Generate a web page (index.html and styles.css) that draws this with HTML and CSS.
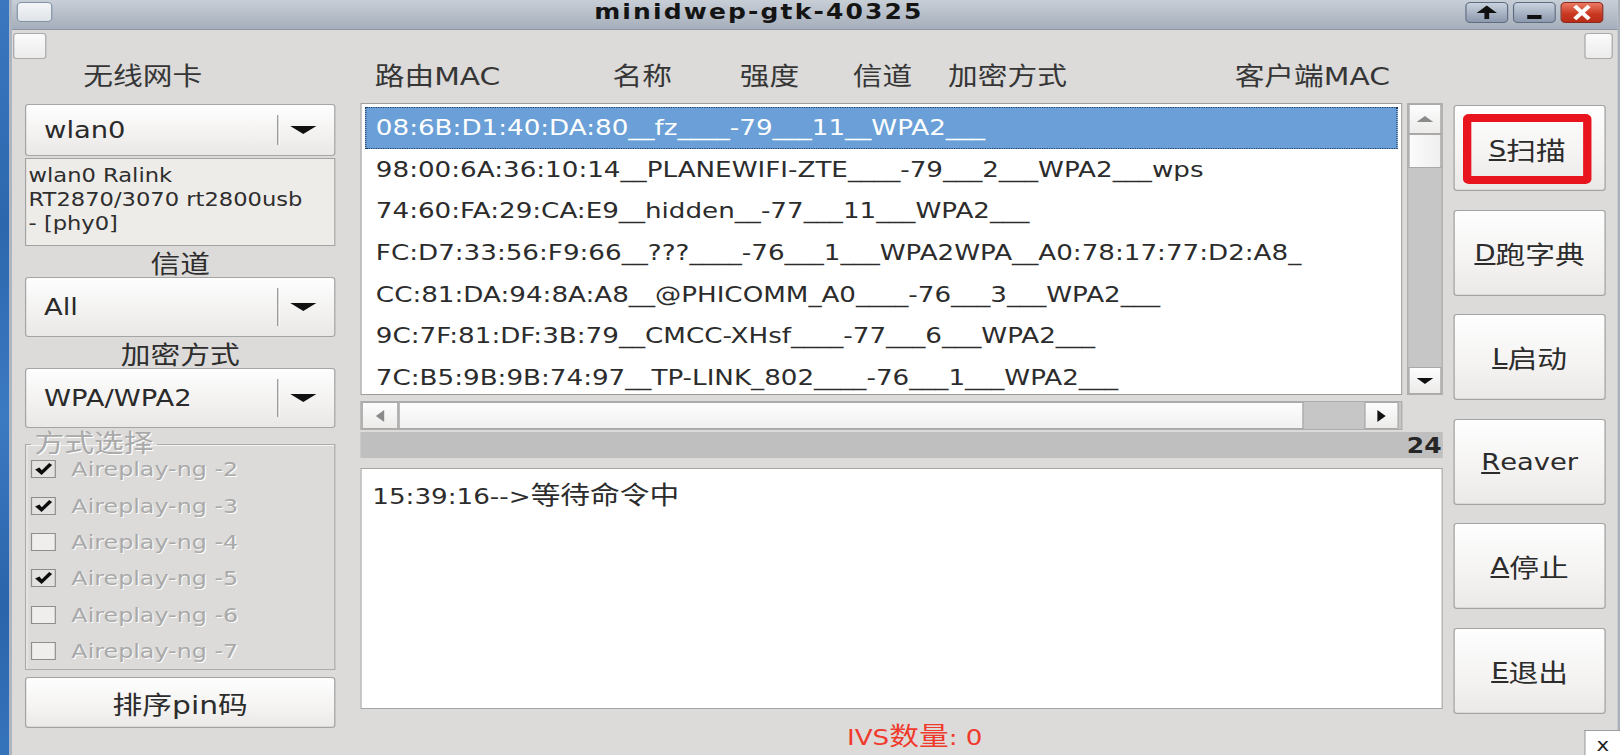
FILE: index.html
```html
<!DOCTYPE html>
<html lang="zh">
<head>
<meta charset="utf-8">
<title>minidwep-gtk-40325</title>
<link rel="stylesheet" href="styles.css">
</head>
<body>
<div class="screen">
  <div class="desktop"></div>
  <div class="window">
    <div class="titlebar">
      <div class="tb-menu"></div>
      <div class="tb-title">minidwep-gtk-40325</div>
      <div class="tb-btn">
        <svg width="36" height="21" viewBox="0 0 36 21"><polygon points="9.5,11 18,3.5 26.5,11" fill="#111"/><rect x="16" y="10" width="4" height="7" fill="#111"/></svg>
      </div>
      <div class="tb-btn">
        <svg width="36" height="21" viewBox="0 0 36 21"><rect x="12" y="13" width="12" height="4" fill="#111"/></svg>
      </div>
      <div class="tb-btn tb-close">
        <svg width="36" height="21" viewBox="0 0 36 21"><path d="M12 4 L24 17 M24 4 L12 17" stroke="#fff" stroke-width="3.6" fill="none"/></svg>
      </div>
    </div>
    <div class="client">
      <div class="topstrip">
        <div class="handle"></div>
        <div class="handle handle-r"></div>
      </div>
      <div class="headers">
        <span class="hd hd1">无线网卡</span>
        <span class="hd hd2">路由MAC</span>
        <span class="hd hd3">名称</span>
        <span class="hd hd4">强度</span>
        <span class="hd hd5">信道</span>
        <span class="hd hd6">加密方式</span>
        <span class="hd">客户端MAC</span>
      </div>
      <div class="body">
        <div class="leftcol">
          <div class="combo combo-short"><span class="combo-text">wlan0</span><span class="sep"></span><span class="arrow"></span></div>
          <div class="info">wlan0 Ralink<br>RT2870/3070 rt2800usb<br>- [phy0]</div>
          <div class="label">信道</div>
          <div class="combo"><span class="combo-text">All</span><span class="sep"></span><span class="arrow"></span></div>
          <div class="label">加密方式</div>
          <div class="combo"><span class="combo-text">WPA/WPA2</span><span class="sep"></span><span class="arrow"></span></div>
          <fieldset class="modes">
            <legend>方式选择</legend>
            <div class="chk-row"><span class="chk on"><svg width="21" height="18" viewBox="0 0 21 18"><path d="M2.8 9.6 L6.8 7.4 L9 10.4 L15.8 2.4 L18.6 4.6 L8.8 15.6 Z" fill="#0d0d0d"/></svg></span><span class="chk-label">Aireplay-ng -2</span></div>
            <div class="chk-row"><span class="chk on"><svg width="21" height="18" viewBox="0 0 21 18"><path d="M2.8 9.6 L6.8 7.4 L9 10.4 L15.8 2.4 L18.6 4.6 L8.8 15.6 Z" fill="#0d0d0d"/></svg></span><span class="chk-label">Aireplay-ng -3</span></div>
            <div class="chk-row"><span class="chk"></span><span class="chk-label">Aireplay-ng -4</span></div>
            <div class="chk-row"><span class="chk on"><svg width="21" height="18" viewBox="0 0 21 18"><path d="M2.8 9.6 L6.8 7.4 L9 10.4 L15.8 2.4 L18.6 4.6 L8.8 15.6 Z" fill="#0d0d0d"/></svg></span><span class="chk-label">Aireplay-ng -5</span></div>
            <div class="chk-row"><span class="chk"></span><span class="chk-label">Aireplay-ng -6</span></div>
            <div class="chk-row"><span class="chk"></span><span class="chk-label">Aireplay-ng -7</span></div>
          </fieldset>
          <div class="gbtn pin-btn">排序pin码</div>
        </div>
        <div class="midcol">
          <div class="listwrap">
            <div class="list">
              <div class="row sel">08:6B:D1:40:DA:80__fz____-79___11__WPA2___</div>
              <div class="row">98:00:6A:36:10:14__PLANEWIFI-ZTE____-79___2___WPA2___wps</div>
              <div class="row">74:60:FA:29:CA:E9__hidden__-77___11___WPA2___</div>
              <div class="row">FC:D7:33:56:F9:66__???____-76___1___WPA2WPA__A0:78:17:77:D2:A8_</div>
              <div class="row">CC:81:DA:94:8A:A8__@PHICOMM_A0____-76___3___WPA2___</div>
              <div class="row">9C:7F:81:DF:3B:79__CMCC-XHsf____-77___6___WPA2___</div>
              <div class="row">7C:B5:9B:9B:74:97__TP-LINK_802____-76___1___WPA2___</div>
            </div>
            <div class="vscroll">
              <div class="sb-btn sb-up"><span class="tri-up dim"></span></div>
              <div class="sb-thumb-v"></div>
              <div class="sb-trough"></div>
              <div class="sb-btn sb-down"><span class="tri-down"></span></div>
            </div>
          </div>
          <div class="hscroll">
            <div class="sb-btn sb-left"><span class="tri-left dim"></span></div>
            <div class="sb-thumb-h"></div>
            <div class="sb-trough"></div>
            <div class="sb-btn sb-right"><span class="tri-right"></span></div>
          </div>
          <div class="countbar">24</div>
          <div class="log">15:39:16--&gt;<span class="cjk">等待命令中</span></div>
          <div class="ivs">IVS<span class="cjk">数量</span>: 0</div>
        </div>
        <div class="rightcol">
          <div class="gbtn act scan"><div class="mark"><u>S</u><span class="cjk">扫描</span></div></div>
          <div class="gbtn act"><u>D</u><span class="cjk">跑字典</span></div>
          <div class="gbtn act"><u>L</u><span class="cjk">启动</span></div>
          <div class="gbtn act"><u>R</u>eaver</div>
          <div class="gbtn act"><u>A</u><span class="cjk">停止</span></div>
          <div class="gbtn act"><u>E</u><span class="cjk">退出</span></div>
        </div>
      </div>
    </div>
  </div>
  <div class="corner-x">x</div>
</div>
</body>
</html>
```

FILE: styles.css
```css
* { box-sizing: border-box; }
html, body { margin: 0; padding: 0; }
body {
  width: 1620px;
  height: 755px;
  overflow: hidden;
  background: #dcdbda;
  font-family: "DejaVu Sans", "Noto Sans CJK SC", sans-serif;
  color: #2e2e2e;
}
.screen {
  width: 1362px;
  height: 755px;
  display: flex;
  position: relative;
  transform: scaleX(1.18943);
  transform-origin: 0 0;
}
.desktop {
  width: 8px;
  flex: none;
  background: linear-gradient(#3a77bf, #2c67ad 30%, #3b79c1 55%, #2a64aa 80%, #3573ba);
}
.window {
  flex: 1;
  min-width: 0;
  display: flex;
  flex-direction: column;
  border-left: 2px solid #aab3bf;
  border-right: 2px solid #a9b0ba;
  background: #dcdbda;
}

/* title bar */
.titlebar {
  height: 30px;
  flex: none;
  display: flex;
  align-items: flex-start;
  padding: 2px 12px 0 4px;
  background: linear-gradient(#c8ced6, #a5aebb);
  border-bottom: 1px solid #8d98a7;
}
.tb-menu {
  width: 30px;
  height: 20px;
  border: 1px solid #8494a8;
  border-radius: 4px;
  background: linear-gradient(#f4f5f7, #dfe3e8);
}
.tb-title {
  flex: 1;
  text-align: center;
  font-weight: bold;
  font-size: 21px;
  line-height: 20px;
  letter-spacing: 1.8px;
  color: #141414;
}
.tb-btn {
  width: 36px;
  height: 21px;
  border: 1px solid #5f6d82;
  border-radius: 4px;
  background: linear-gradient(#c9d2de, #8c99ad);
  display: flex;
  align-items: center;
  justify-content: center;
  overflow: hidden;
}
.tb-btn + .tb-btn { margin-left: 4px; }
.tb-btn svg { display: block; flex: none; }
.tb-close {
  border-color: #8a2a1e;
  background: linear-gradient(#ec7a63, #c8361f 60%, #b82d19);
}

/* client area */
.client {
  flex: 1;
  display: flex;
  flex-direction: column;
  padding-left: 1px;
}
.topstrip {
  height: 32px;
  flex: none;
  display: flex;
  justify-content: space-between;
  align-items: flex-start;
  padding-top: 3px;
}
.handle {
  width: 28px;
  height: 26px;
  border: 1px solid #aaaaaa;
  border-radius: 3px;
  background: linear-gradient(#fbfbfb, #ebebeb);
}
.handle-r { width: 24px; margin-right: 4px; }

.headers {
  height: 30px;
  flex: none;
  display: flex;
  white-space: nowrap;
  line-height: 30px;
  font-size: 25px;
  color: #363636;
  padding-left: 59px;
}
.hd { flex: none; }
.hd1 { width: 245px; }
.hd2 { width: 200px; }
.hd3 { width: 107px; }
.hd4 { width: 95px; }
.hd5 { width: 80px; }
.hd6 { width: 241px; }

.body {
  flex: 1;
  display: flex;
  margin-top: 11px;
}

/* left column */
.leftcol {
  width: 261px;
  margin-left: 10px;
  display: flex;
  flex-direction: column;
}
.combo {
  height: 60px;
  flex: none;
  display: flex;
  align-items: center;
  padding: 0 15px 0 15px;
  border: 1px solid #a5a5a5;
  border-radius: 3px;
  background: linear-gradient(#fefefe, #f3f2f1 55%, #e9e8e7);
  font-size: 23px;
  color: #2a2a2a;
}
.combo-short { height: 52px; margin-top: 1px; }
.combo-text { flex: 1; }
.sep {
  width: 1px;
  align-self: stretch;
  margin: 10px 0;
  background: #8f8f8f;
  box-shadow: 1px 0 0 #ffffff;
}
.arrow {
  width: 0;
  height: 0;
  margin-left: 10px;
  border-left: 11px solid transparent;
  border-right: 11px solid transparent;
  border-top: 8px solid #111;
}
.info {
  height: 88px;
  flex: none;
  margin-top: 2px;
  padding: 4px 2px 0;
  border: 1px solid #a3a3a3;
  background: #eeece9;
  font-size: 19px;
  line-height: 24px;
  color: #2e2e2e;
  white-space: nowrap;
}
.label {
  height: 31px;
  flex: none;
  padding-top: 7px;
  line-height: 24px;
  text-align: center;
  font-size: 25px;
  color: #2e2e2e;
}
.modes {
  margin: 9px 0 0;
  padding: 0 0 0 4px;
  border: 1px solid #ababab;
  box-shadow: inset 1px 1px 0 #f4f4f4;
  flex: none;
}
.modes legend {
  padding: 0 3px;
  font-size: 25px;
  line-height: 14px;
  color: #a9a9a9;
  text-shadow: 1px 1px 0 #ffffff;
}
.chk-row {
  height: 36.4px;
  display: flex;
  align-items: center;
}
.chk {
  width: 21px;
  height: 18px;
  flex: none;
  border: 1px solid #8e8e8e;
  background: #efeeed;
  display: flex;
  align-items: center;
  justify-content: center;
}
.chk.on { background: #e3e2e1; }
.chk svg { display: block; }
.chk-label {
  margin-left: 13px;
  font-size: 20px;
  color: #a9a9a9;
  text-shadow: 1px 1px 0 #fbfbfb;
  white-space: nowrap;
}

/* generic gtk button */
.gbtn {
  display: flex;
  align-items: center;
  justify-content: center;
  border: 1px solid #a3a3a3;
  border-radius: 3px;
  background: linear-gradient(#fefefe, #f5f4f3 55%, #eae9e7);
  box-shadow: inset 0 -1px 0 #dad9d7;
  color: #2c2c2c;
  white-space: nowrap;
}
.pin-btn {
  height: 51px;
  flex: none;
  margin-top: 7px;
  font-size: 25px;
}

/* middle column */
.midcol {
  width: 910px;
  margin-left: 21px;
  display: flex;
  flex-direction: column;
}
.listwrap {
  height: 292px;
  flex: none;
  display: flex;
  gap: 4px;
}
.list {
  flex: 1;
  min-width: 0;
  overflow: hidden;
  background: #ffffff;
  border: 1px solid #9d9d9d;
  padding: 3px 3px 0;
  font-size: 22px;
}
.row {
  height: 41.7px;
  line-height: 41.7px;
  padding-left: 9px;
  white-space: nowrap;
  color: #2c2c2c;
}
.row.sel {
  background: #6a9fd7;
  color: #ffffff;
  outline: 1px dotted #1f3a5e;
  outline-offset: -1px;
}
.vscroll {
  width: 30px;
  flex: none;
  display: flex;
  flex-direction: column;
  border: 1px solid #adadad;
  background: #c6c6c6;
}
.sb-btn {
  flex: none;
  display: flex;
  align-items: center;
  justify-content: center;
  border: 1px solid #a9a9a9;
  background: linear-gradient(#fdfdfd, #ecebea);
}
.sb-up { height: 30px; }
.sb-down { height: 27px; }
.sb-thumb-v {
  height: 34px;
  flex: none;
  border: 1px solid #a9a9a9;
  background: linear-gradient(90deg, #fbfbfb, #efefef);
}
.sb-trough { flex: 1; }
.tri-up, .tri-down {
  width: 0;
  height: 0;
  border-left: 7px solid transparent;
  border-right: 7px solid transparent;
}
.tri-up { border-bottom: 6px solid #777; }
.tri-down { border-top: 6px solid #111; }
.tri-left, .tri-right {
  width: 0;
  height: 0;
  border-top: 6px solid transparent;
  border-bottom: 6px solid transparent;
}
.tri-left { border-right: 7px solid #8a8a8a; }
.tri-right { border-left: 7px solid #111; }
.tri-up.dim { border-bottom-color: #8a8a8a; }

.hscroll {
  height: 29px;
  width: 876px;
  flex: none;
  margin-top: 6px;
  display: flex;
  border: 1px solid #adadad;
  background: #c6c6c6;
}
.sb-left { width: 31px; }
.sb-right { width: 29px; margin-right: 2px; }
.sb-thumb-h {
  width: 761px;
  flex: none;
  border: 1px solid #a9a9a9;
  background: linear-gradient(#fdfdfd, #f1f1f1);
}
.countbar {
  height: 26px;
  flex: none;
  margin-top: 2px;
  background: #bfbfbf;
  text-align: right;
  padding-right: 1px;
  font-size: 21px;
  font-weight: bold;
  line-height: 28px;
  color: #262626;
}
.log {
  height: 241px;
  flex: none;
  margin-top: 10px;
  padding: 14px 0 0 9px;
  background: #ffffff;
  border: 1px solid #a5a5a5;
  font-size: 22px;
  line-height: 26px;
  color: #2c2c2c;
  white-space: nowrap;
}
.cjk { font-size: 25px; }
.ivs {
  height: 46px;
  flex: none;
  padding: 13px 0 0 22px;
  text-align: center;
  font-size: 22px;
  line-height: 30px;
  color: #f03a2c;
}

/* right column */
.rightcol {
  width: 128px;
  height: 611px;
  margin-left: 9px;
  padding-top: 2px;
  display: flex;
  flex-direction: column;
  justify-content: space-between;
}
.act {
  height: 86px;
  flex: none;
  font-size: 23px;
}
.scan {
  padding: 8px 11px 6px 7px;
  align-items: stretch;
}
.mark {
  flex: 1;
  display: flex;
  align-items: center;
  justify-content: center;
  border-style: solid;
  border-color: #e8141e;
  border-width: 8.5px 7.5px;
  border-radius: 5px;
}

.corner-x {
  position: absolute;
  right: 0;
  bottom: 0;
  width: 30px;
  height: 25px;
  background: #ffffff;
  border: 1px solid #9c9c9c;
  border-right: none;
  border-bottom: none;
  font-size: 18px;
  line-height: 28px;
  text-align: center;
  color: #222;
  overflow: hidden;
}
```
